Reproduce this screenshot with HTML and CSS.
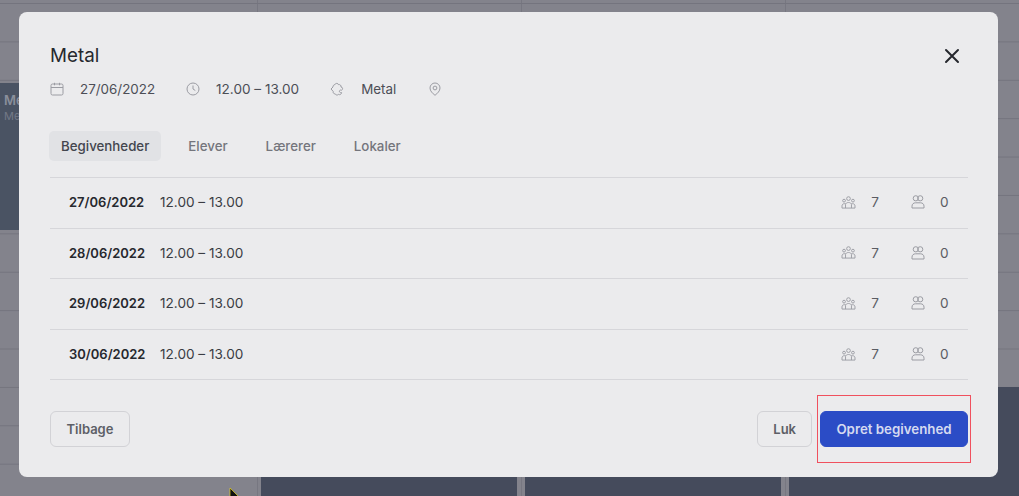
FILE: index.html
```html
<!DOCTYPE html>
<html lang="da">
<head>
<meta charset="utf-8">
<title>Metal</title>
<link rel="stylesheet" href="styles.css">
</head>
<body>
<svg class="defs" aria-hidden="true">
  <symbol id="group" viewBox="0 0 16 14"><circle cx="8" cy="2.800" r="2"/><circle cx="3.200" cy="5" r="1.500"/><circle cx="12.800" cy="5" r="1.500"/><path d="M4.800 13V9.200c0-1.300 1.400-2.200 3.200-2.200s3.200.9 3.200 2.200V13M1 13v-2.300C1 9.300 2 8.300 3.500 8.300h1.300M15 13v-2.300c0-1.400-1-2.400-2.500-2.400h-1.300M1 13h14"/></symbol>
  <symbol id="pair" viewBox="0 0 14 14"><circle cx="4.800" cy="3.300" r="2.600"/><circle cx="9.200" cy="3.300" r="2.600"/><path d="M1 13v-1.800C1 9 2.500 7.800 4.500 7.800h5c2 0 3.500 1.200 3.500 3.400V13z"/></symbol>
</svg>
<div class="calendar">
  <div class="event event-left"><strong>Metal</strong><span>Metal</span></div>
  <div class="event event-b"></div>
  <div class="event event-c"></div>
  <div class="event event-d"></div>
</div>
<svg class="cursor" width="12" height="16" viewBox="0 0 12 16"><path d="M1 0v12l3-2.500 2 4.500 2-1-2-4h4z" fill="#111" stroke="#e8d21d" stroke-width=".7"/></svg>
<section class="modal">
  <header class="head">
    <div>
      <h1>Metal</h1>
      <div class="meta">
        <svg class="ic ic-date" viewBox="0 0 14 14"><rect x="1" y="2" width="12" height="11" rx="1.500"/><path d="M1 5.500h12M4.500 .8v2.500M9.500 .8v2.500"/></svg>
        <span class="date">27/06/2022</span>
        <svg class="ic ic-time" viewBox="0 0 14 14"><circle cx="7" cy="7" r="6"/><path d="M7 3.500V7l2.300 1.500"/></svg>
        <span class="time">12.00 – 13.00</span>
        <svg class="ic ic-sub" viewBox="0 0 14 14"><path d="M5 2.600c0-1.600 3.400-1.600 3.400 0 1.500-.4 3 .8 2.600 2.400 1.800 0 2.200 2.600.6 3.200-1-.5-2.200 0-2.200 1.200 0 1 1.200 1.600 2.200 1.200 0 1.600-1.800 2.600-3.200 1.800-.8 1-2.800.8-3.200-.6-1.400.2-2.400-1-2-2.400L1 7l2-2c-.2-1.200.8-2.400 2-2.400z"/></svg>
        <span class="sub">Metal</span>
        <svg class="ic ic-pin" viewBox="0 0 14 14"><path d="M7 13.300C4.500 11.300 2 9 2 6a5 5 0 0 1 10 0c0 3-2.500 5.300-5 7.300z"/><circle cx="7" cy="6" r="1.900"/></svg>
      </div>
    </div>
    <svg class="close" viewBox="0 0 16 16"><path d="M2 2l12 12M14 2L2 14"/></svg>
  </header>
  <nav class="tabs">
    <a class="tab active">Begivenheder</a>
    <a class="tab">Elever</a>
    <a class="tab">Lærerer</a>
    <a class="tab">Lokaler</a>
  </nav>
  <ul class="rows">
    <li class="row"><b>27/06/2022</b><span class="hours">12.00 – 13.00</span>
      <svg class="ic ic-group"><use href="#group"/></svg><span class="num">7</span>
      <svg class="ic ic-pair"><use href="#pair"/></svg><span class="num">0</span></li>
    <li class="row"><b>28/06/2022</b><span class="hours">12.00 – 13.00</span>
      <svg class="ic ic-group"><use href="#group"/></svg><span class="num">7</span>
      <svg class="ic ic-pair"><use href="#pair"/></svg><span class="num">0</span></li>
    <li class="row"><b>29/06/2022</b><span class="hours">12.00 – 13.00</span>
      <svg class="ic ic-group"><use href="#group"/></svg><span class="num">7</span>
      <svg class="ic ic-pair"><use href="#pair"/></svg><span class="num">0</span></li>
    <li class="row"><b>30/06/2022</b><span class="hours">12.00 – 13.00</span>
      <svg class="ic ic-group"><use href="#group"/></svg><span class="num">7</span>
      <svg class="ic ic-pair"><use href="#pair"/></svg><span class="num">0</span></li>
  </ul>
  <footer class="foot">
    <button class="btn btn-back">Tilbage</button>
    <div class="actions">
      <button class="btn">Luk</button>
      <div class="marked"><button class="btn primary">Opret begivenhed</button></div>
    </div>
  </footer>
</section>
</body>
</html>
```
FILE: styles.css
```css
* { box-sizing: border-box; }
html, body { margin: 0; height: 100%; overflow: hidden; }
body { position: relative; font-family: Inter, "Liberation Sans", sans-serif; color: #2b2d33; }
.defs { display: none; }

.calendar {
  height: 496px;
  display: grid;
  grid-template-columns: 257px 264px 264px 234px;
  grid-template-rows: 3px repeat(13, 38.4px);
  background-color: #83838c;
  background-image:
    linear-gradient(#74747e 1px, transparent 1px),
    linear-gradient(90deg, #777781 1px, transparent 1px);
  background-size: 100% 38.4px, 264px 100%;
  background-position: 0 3px, 257px 0;
}
.event { background: #454b5c; color: #8a8f9c; font-size: 13px; padding: 9px 4px; overflow: hidden; }
.event strong { display: block; font-weight: 600; line-height: 17px; }
.event span { display: block; font-size: 11px; line-height: 15px; color: #737987; }
.event-left { grid-column: 1; grid-row: 4 / span 4; margin: 3px 4px 3px 0; background: #4a5363; }
.event-b, .event-c, .event-d { grid-row: 12 / span 4; margin: 0 4px; }
.event-b { grid-column: 2; }
.event-c { grid-column: 3; }
.event-d { grid-column: 4; margin-right: 0; }

.cursor { position: absolute; left: 229px; top: 488px; }

.modal {
  position: absolute;
  left: 19px; top: 12px;
  width: 979px; height: 465px;
  padding: 0 30px 0 31px;
  background: #ebebed;
  border-radius: 8px;
  display: flex;
  flex-direction: column;
}
.head { display: flex; justify-content: space-between; align-items: flex-start; padding-top: 32px; }
h1 { margin: 0; font-size: 18.800px; font-weight: 400; line-height: 24px; color: #26282e; }
.close { width: 16px; height: 16px; margin-top: 4px; margin-right: 8px; fill: none; stroke: #26282e; stroke-width: 2; stroke-linecap: round; }

.meta { display: flex; align-items: center; height: 20px; margin-top: 11px; font-size: 13.400px; color: #4c4e56; }
.ic { fill: none; stroke: #9b9ca3; stroke-width: 1; flex: none; }
.ic-date, .ic-time, .ic-sub, .ic-pin { width: 14px; height: 14px; }
.date { margin-left: 16px; }
.ic-time { margin-left: 31px; }
.time { margin-left: 16px; font-size: 13.550px; }
.ic-sub { margin-left: 31px; }
.sub { margin-left: 17px; }
.ic-pin { margin-left: 32px; }

.tabs { display: flex; gap: 14px; margin-top: 32px; margin-left: -1px; }
.tab { height: 30px; padding: 0 12px; border-radius: 5px; font-size: 13.300px; font-weight: 500; line-height: 30px; color: #74757c; }
.tab.active { margin-right: 1px; background: #e1e2e5; color: #44464e; }

.rows { list-style: none; margin: 16px 0 0; padding: 0; border-top: 1px solid #d6d6da; }
.row { display: flex; align-items: center; height: 50.600px; padding: 0 0 1px 19px; border-bottom: 1px solid #d6d6da; font-size: 13.600px; color: #3a3c43; }
.row b { width: 91px; font-size: 13px; font-weight: 600; color: #26282e; }
.hours { margin-right: auto; }
.ic-group { width: 15px; height: 13px; }
.ic-pair { width: 14px; height: 14px; margin-left: 32px; }
.num { width: 8px; margin-left: 15px; text-align: center; color: #5a5c63; }
.row .num:last-child { margin-right: 20px; }

.foot { display: flex; justify-content: space-between; margin-top: 31px; }
.actions { display: flex; gap: 8px; }
.marked { position: relative; }
.marked::after { content: ""; position: absolute; left: -3px; right: -3px; top: -16px; bottom: -16px; border: 1px solid #f0505e; pointer-events: none; }
.btn { height: 36px; padding: 0 15px; background: transparent; border: 1px solid #d2d2d6; border-radius: 6px; font: 600 13px Inter, "Liberation Sans", sans-serif; color: #5d5f67; }
.btn-back { width: 80px; padding: 0; }
.primary { width: 148px; padding: 0; background: #2b4cc6; border-color: #2b4cc6; color: #d5daf0; font-size: 13.300px; }
```
